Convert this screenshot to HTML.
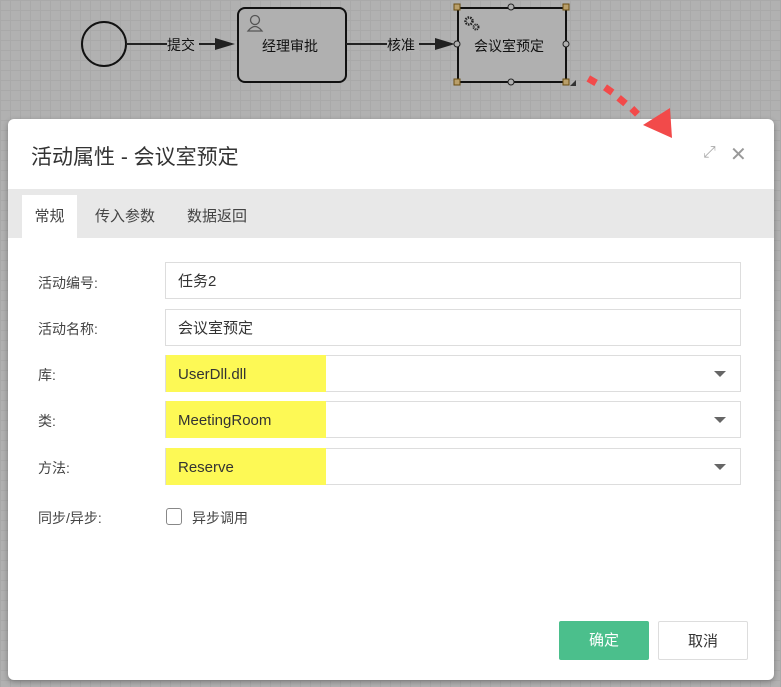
<!DOCTYPE html>
<html><head><meta charset="utf-8"><style>
*{box-sizing:border-box;margin:0;padding:0}
body{width:781px;height:687px;overflow:hidden;background:#b1b1b1;font-family:"Liberation Sans","Noto Sans CJK SC",sans-serif;position:relative;
background-image:linear-gradient(#a9a9a9 1px,transparent 1px),linear-gradient(90deg,#a9a9a9 1px,transparent 1px);background-size:10px 10px}
.abs{position:absolute}
.dlg{left:8px;top:119px;width:766px;height:561px;background:#fff;border-radius:6px;box-shadow:0 2px 6px rgba(0,0,0,.3)}
.title{left:31px;top:141px;font-size:21px;color:#333}
.tabs{left:8px;top:189px;width:766px;height:49px;background:#e8e8e8}
.tab{top:195px;height:43px;line-height:43px;font-size:15px;color:#444}
.lbl{left:38px;font-size:14px;color:#444}
.inp{left:165px;width:576px;height:37px;border:1px solid #ddd;font-size:15px;color:#333;line-height:37px;padding-left:12px}
.hl{position:absolute;left:0;top:-1px;width:160px;height:37px;background:#fdf955}
.inp span{position:relative}
.caret{position:absolute;right:14px;top:15px;border-left:6px solid transparent;border-right:6px solid transparent;border-top:6px solid #666}
.btn{top:621px;height:39px;width:90px;line-height:39px;text-align:center;font-size:15px;border-radius:2px}
</style></head><body>
<svg class="abs" style="left:0;top:0" width="781" height="120">
<circle cx="104" cy="44" r="22" fill="none" stroke="#111" stroke-width="2"/>
<line x1="126" y1="44" x2="230" y2="44" stroke="#222" stroke-width="2"/>
<polygon points="215,38 235,44 215,50" fill="#222"/>
<rect x="238" y="8" width="108" height="74" rx="7" fill="#b0b0b0" stroke="#111" stroke-width="2"/>
<line x1="346" y1="44" x2="450" y2="44" stroke="#222" stroke-width="2"/>
<polygon points="435,38 455,44 435,50" fill="#222"/>
<rect x="458" y="8" width="108" height="74" rx="2" fill="#b0b0b0" stroke="#111" stroke-width="2"/>
<rect x="167" y="36" width="32" height="16" fill="#b1b1b1"/>
<rect x="387" y="36" width="32" height="16" fill="#b1b1b1"/>
<text x="167" y="50" font-size="14" font-family="Noto Sans CJK SC" fill="#111">提交</text>
<text x="387" y="50" font-size="14" font-family="Noto Sans CJK SC" fill="#111">核准</text>
<text x="262" y="51" font-size="14" font-family="Noto Sans CJK SC" fill="#111">经理审批</text>
<text x="474" y="51" font-size="14" font-family="Noto Sans CJK SC" fill="#111">会议室预定</text>
<circle cx="255" cy="20" r="4.5" fill="none" stroke="#555" stroke-width="1.3"/><path d="M248 31 q7-9 14 0z" fill="none" stroke="#555" stroke-width="1.3"/>
<circle cx="469" cy="21" r="3.5" fill="none" stroke="#222" stroke-width="2.5" stroke-dasharray="1.5 1"/><circle cx="476" cy="27" r="2.5" fill="none" stroke="#222" stroke-width="2" stroke-dasharray="1.2 0.8"/>
<g fill="#b0b0b0" stroke="#222"><circle cx="511" cy="7" r="3"/><circle cx="511" cy="82" r="3"/><circle cx="457" cy="44" r="3"/><circle cx="566" cy="44" r="3"/></g>
<g fill="#b99f6a" stroke="#6a4e12"><rect x="454" y="4" width="6" height="6"/><rect x="563" y="4" width="6" height="6"/><rect x="454" y="79" width="6" height="6"/><rect x="563" y="79" width="6" height="6"/></g>
<polygon points="570,86 576,80 576,86" fill="#333"/>
</svg>
<div class="abs dlg"></div>
<svg class="abs" style="left:0;top:0;z-index:5" width="781" height="150">
<g fill="#f24a4a"><rect x="588" y="77" width="9" height="7" transform="rotate(30 592 80)"/><rect x="604" y="86" width="9" height="7" transform="rotate(35 608 90)"/><rect x="618" y="97" width="9" height="7" transform="rotate(40 622 100)"/><rect x="631" y="108" width="8" height="7" transform="rotate(45 635 111)"/><polygon points="643,125 670,108 672,138"/></g>
</svg>
<div class="abs title">活动属性 - 会议室预定</div>
<div class="abs" style="left:703px;top:144px;font-size:16px;color:#aaa">⤢</div>
<div class="abs" style="left:730px;top:142px;font-size:20px;color:#999">✕</div>
<div class="abs tabs"></div>
<div class="abs tab" style="left:22px;width:55px;background:#fff;text-align:center">常规</div>
<div class="abs tab" style="left:95px">传入参数</div>
<div class="abs tab" style="left:187px">数据返回</div>
<div class="abs lbl" style="top:273px">活动编号:</div>
<div class="abs lbl" style="top:319px">活动名称:</div>
<div class="abs lbl" style="top:365px">库:</div>
<div class="abs lbl" style="top:411px">类:</div>
<div class="abs lbl" style="top:458px">方法:</div>
<div class="abs lbl" style="top:508px">同步/异步:</div>
<div class="abs inp" style="top:262px">任务2</div>
<div class="abs inp" style="top:309px">会议室预定</div>
<div class="abs inp" style="top:355px"><div class="hl"></div><span>UserDll.dll</span><i class="caret"></i></div>
<div class="abs inp" style="top:401px"><div class="hl"></div><span>MeetingRoom</span><i class="caret"></i></div>
<div class="abs inp" style="top:448px"><div class="hl"></div><span>Reserve</span><i class="caret"></i></div>
<div class="abs" style="left:166px;top:508px;width:16px;height:17px;border:1px solid #888;border-radius:3px"></div>
<div class="abs" style="left:192px;top:508px;font-size:14px;color:#444">异步调用</div>
<div class="abs btn" style="left:559px;background:#4bbf8c;color:#fff">确定</div>
<div class="abs btn" style="left:658px;border:1px solid #ddd;color:#333;background:#fff">取消</div>
</body></html>
